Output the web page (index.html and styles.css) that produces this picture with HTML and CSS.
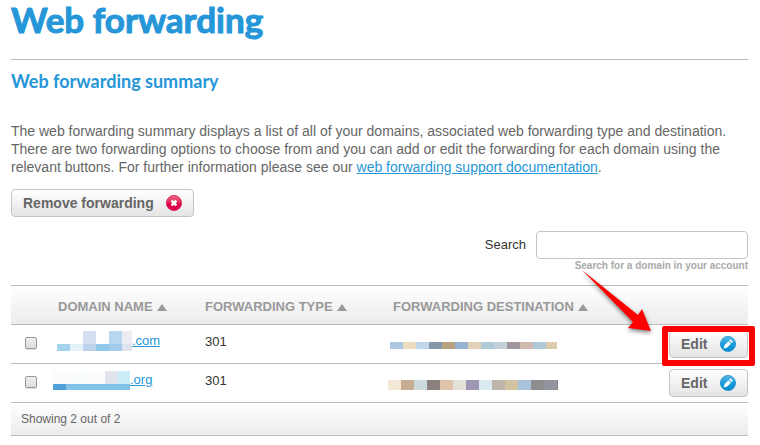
FILE: index.html
```html
<!DOCTYPE html>
<html lang="en">
<head>
<meta charset="UTF-8" />
<meta name="viewport" content="width=device-width, initial-scale=1" />
<title>Web forwarding</title>
<link rel="stylesheet" href="styles.css">
</head>
<body>
  <main class="page">
    <h1>Web forwarding</h1>
    <h2>Web forwarding summary</h2>

    <p class="intro">The web forwarding summary displays a list of all of your domains, associated web forwarding type and destination. There are two forwarding options to choose from and you can add or edit the forwarding for each domain using the relevant buttons. For further information please see our <a href="#">web forwarding support documentation</a>.</p>

    <button type="button" class="btn">
      Remove forwarding
      <svg class="btn-icon" viewBox="0 0 16 16" aria-hidden="true">
        <defs>
          <linearGradient id="red" x1="0" y1="0" x2="0" y2="1">
            <stop offset="0" stop-color="#ee6a86"/>
            <stop offset=".45" stop-color="#e32a5c"/>
            <stop offset=".55" stop-color="#d90049"/>
            <stop offset="1" stop-color="#e4004f"/>
          </linearGradient>
        </defs>
        <circle cx="8" cy="8" r="7.6" fill="url(#red)" stroke="#d3124d" stroke-width=".8"/>
        <path d="M5.6 5.6l4.8 4.8M10.4 5.6l-4.8 4.8" stroke="#fff" stroke-width="2.6"/>
      </svg>
    </button>

    <form class="search">
      <label for="search">Search</label>
      <input type="text" id="search" aria-describedby="search-hint">
      <small id="search-hint">Search for a domain in your account</small>
    </form>

    <table class="domains">
      <colgroup>
        <col class="col-check">
        <col class="col-name">
        <col class="col-type">
        <col>
        <col class="col-action">
      </colgroup>
      <thead>
        <tr>
          <th></th>
          <th>DOMAIN NAME <span class="sort"></span></th>
          <th>FORWARDING TYPE <span class="sort"></span></th>
          <th>FORWARDING DESTINATION <span class="sort"></span></th>
          <th></th>
        </tr>
      </thead>
      <tbody>
        <tr>
          <td class="check"><input type="checkbox" aria-label="Select .com domain"></td>
          <td>
            <div class="name">
              <svg width="79" height="20" viewBox="0 0 79 20" shape-rendering="crispEdges" aria-hidden="true">
                <path fill="#d3dff0" d="M30 0h13v13H30z"/>
                <path fill="#b8d7ee" d="M56 0h13v13H56z"/>
                <path fill="#eeebf2" d="M69 0h10v13H69z"/>
                <path fill="#a4d2ec" d="M4 13h13v7H4z"/>
                <path fill="#e4f1f6" d="M17 13h13v7H17z"/>
                <path fill="#bdd2ea" d="M30 13h13v7H30z"/>
                <path fill="#8fc8e9" d="M43 13h13v7H43z"/>
                <path fill="#a1cbe8" d="M56 13h13v7H56z"/>
                <path fill="#dfe1ed" d="M69 13h10v7H69z"/>
              </svg>
              <a href="#">.com</a>
            </div>
          </td>
          <td class="type">301</td>
          <td class="destination">
            <svg width="170" height="10" viewBox="0 0 170 10" shape-rendering="crispEdges" aria-hidden="true">
              <path fill="#adc7e2" d="M2 1h13v7H2z"/>
              <path fill="#ecddbe" d="M15 1h13v7H15z"/>
              <path fill="#bfd6eb" d="M28 1h13v7H28z"/>
              <path fill="#8797aa" d="M41 1h13v7H41z"/>
              <path fill="#b8a17e" d="M54 1h13v7H54z"/>
              <path fill="#95b3d1" d="M67 1h13v7H67z"/>
              <path fill="#e0d1b8" d="M80 1h13v7H80z"/>
              <path fill="#afcad7" d="M93 1h13v7H93z"/>
              <path fill="#c4d1d9" d="M106 1h13v7h-13z"/>
              <path fill="#a3979f" d="M119 1h13v7h-13z"/>
              <path fill="#d0bab0" d="M132 1h13v7h-13z"/>
              <path fill="#b0c9d8" d="M145 1h13v7h-13z"/>
              <path fill="#dccbac" d="M158 1h11v7h-11z"/>
            </svg>
          </td>
          <td>
            <div class="action">
              <button type="button" class="btn">
                Edit
                <svg class="btn-icon" viewBox="0 0 16 16" aria-hidden="true">
                  <defs>
                    <linearGradient id="blue" x1="0" y1="0" x2="0" y2="1">
                      <stop offset="0" stop-color="#58b8e6"/>
                      <stop offset=".5" stop-color="#1c9cdb"/>
                      <stop offset="1" stop-color="#0089d0"/>
                    </linearGradient>
                  </defs>
                  <circle cx="8" cy="8" r="7.6" fill="url(#blue)" stroke="#1b93d2" stroke-width=".8"/>
                  <path d="M10.4 3.2l2.6 2.6-1.3 1.3-2.6-2.6zM8.4 5.2L11 7.8l-3.8 3.8-3.6 1 1-3.6z" fill="#fff"/>
                </svg>
              </button>
              <span class="highlight"></span>
              <svg class="arrow" width="80" height="72" viewBox="0 0 80 72" aria-hidden="true">
                <path d="M4 4L60 49l4-6 9 22-23-3 5-6z" fill="#fe0000"/>
              </svg>
            </div>
          </td>
        </tr>
        <tr>
          <td class="check"><input type="checkbox" aria-label="Select .org domain"></td>
          <td>
            <div class="name">
              <svg width="77" height="20" viewBox="0 0 77 20" shape-rendering="crispEdges" aria-hidden="true">
                <path fill="#fbfcfe" d="M0 1h26v13H0z"/>
                <path fill="#f9fdfe" d="M26 1h13v13H26z"/>
                <path fill="#fdfcfd" d="M39 1h13v13H39z"/>
                <path fill="#e1e4ed" d="M52 1h13v13H52z"/>
                <path fill="#c8edf7" d="M65 1h12v13H65z"/>
                <path fill="#51a1d8" d="M0 14h13v6H0z"/>
                <path fill="#82c2e6" d="M13 14h64v6H13z"/>
              </svg>
              <a href="#">.org</a>
            </div>
          </td>
          <td class="type">301</td>
          <td class="destination">
            <svg width="170" height="10" viewBox="0 0 170 10" shape-rendering="crispEdges" aria-hidden="true">
              <path fill="#f3e7d5" d="M0 0h13v10H0z"/>
              <path fill="#c8ac91" d="M13 0h13v10H13z"/>
              <path fill="#cddadd" d="M26 0h13v10H26z"/>
              <path fill="#8b807d" d="M39 0h13v10H39z"/>
              <path fill="#dfc4ab" d="M52 0h13v10H52z"/>
              <path fill="#e4e2d8" d="M65 0h13v10H65z"/>
              <path fill="#a097b4" d="M78 0h13v10H78z"/>
              <path fill="#daebf2" d="M91 0h13v10H91z"/>
              <path fill="#bdb5aa" d="M104 0h13v10h-13z"/>
              <path fill="#d2c3a1" d="M117 0h13v10h-13z"/>
              <path fill="#a9c3dd" d="M130 0h13v10h-13z"/>
              <path fill="#8e8e91" d="M143 0h13v10h-13z"/>
              <path fill="#9295a0" d="M156 0h13v10h-13z"/>
              <path fill="#818186" d="M169 0h1v10h-1z"/>
            </svg>
          </td>
          <td>
            <div class="action">
              <button type="button" class="btn">
                Edit
                <svg class="btn-icon" viewBox="0 0 16 16" aria-hidden="true">
                  <circle cx="8" cy="8" r="7.6" fill="url(#blue)" stroke="#1b93d2" stroke-width=".8"/>
                  <path d="M10.4 3.2l2.6 2.6-1.3 1.3-2.6-2.6zM8.4 5.2L11 7.8l-3.8 3.8-3.6 1 1-3.6z" fill="#fff"/>
                </svg>
              </button>
            </div>
          </td>
        </tr>
      </tbody>
      <tfoot>
        <tr>
          <td colspan="5">Showing 2 out of 2</td>
        </tr>
      </tfoot>
    </table>
  </main>
</body>
</html>
```
FILE: styles.css
```css
* {
  box-sizing: border-box;
}
body {
  margin: 0;
  background: #fff;
  color: #666;
  font-family: "Liberation Sans", Arial, sans-serif;
  font-size: 14px;
  line-height: 18px;
}
.page {
  padding: 0 12px 0 11px;
}
a {
  color: #2596d8;
}
h1, h2 {
  margin: 0;
  color: #2596d8;
  font-family: Lato, "Liberation Sans", sans-serif;
  font-weight: bold;
}
h1 {
  height: 60px;
  border-bottom: 1px solid #bbb;
  font-size: 35px;
  line-height: 38px;
  -webkit-text-stroke: 1px #2596d8;
}
h2 {
  margin-bottom: 30px;
  padding-top: 10px;
  font-size: 18px;
  line-height: 22px;
}
.intro {
  margin: 0 0 13px;
}

/* Buttons */
.btn {
  display: flex;
  align-items: center;
  gap: 12px;
  height: 28px;
  padding: 0 11px;
  border: 1px solid #c4c4c4;
  border-radius: 4px;
  background: linear-gradient(#fff, #e4e4e4);
  color: #666;
  font: bold 14px "Liberation Sans", Arial, sans-serif;
  white-space: nowrap;
  cursor: pointer;
}
.btn-icon {
  width: 16px;
  height: 16px;
}

/* Search */
.search {
  display: grid;
  grid-template-columns: auto 212px;
  justify-content: end;
  align-items: center;
  column-gap: 10px;
  margin-top: 14px;
  color: #333;
  font-size: 13px;
}
.search input {
  width: 100%;
  height: 28px;
  padding: 0 6px;
  border: 1px solid #c4c4c4;
  border-radius: 4px;
}
.search small {
  grid-column: 2;
  color: #aaa;
  font-size: 10px;
  font-weight: bold;
  line-height: 13px;
  text-align: right;
  white-space: nowrap;
}

/* Domain table */
.domains {
  width: 100%;
  margin-top: 13px;
  border-collapse: separate;
  border-spacing: 0;
  border-top: 1px solid #bbb;
  table-layout: fixed;
  color: #333;
  font-size: 13px;
}
.col-check {
  width: 42px;
}
.col-name {
  width: 147px;
}
.col-type {
  width: 188px;
}
.col-action {
  width: 100px;
}
.domains th,
.domains td {
  height: 39px;
  padding: 0;
  border-bottom: 1px solid #bbb;
}
.domains thead,
.domains tfoot {
  background: linear-gradient(#fff, #ebebeb);
}
.domains th {
  padding: 4px 0 0 5px;
  color: #999;
  text-align: left;
  white-space: nowrap;
}
.sort {
  display: inline-block;
  margin-left: 1px;
  border: 5px solid transparent;
  border-top: 0;
  border-bottom: 7px solid #999;
}
.domains .check {
  padding: 0 0 2px 14px;
}
.check input {
  display: block;
  width: 12px;
  height: 12px;
  margin: 0;
  appearance: none;
  border: 1px solid #999;
  border-radius: 2px;
  background: linear-gradient(#eee, #ddd);
  box-shadow: 0 1px 1px #ddd;
}
.name {
  display: flex;
  align-items: center;
  padding-bottom: 6px;
}
.domains .type {
  padding: 0 0 4px 5px;
}
.domains .destination {
  padding-top: 4px;
}
.destination svg {
  display: block;
}
.action {
  position: relative;
  width: 79px;
  margin-left: auto;
}
.action .btn {
  width: 100%;
  justify-content: space-between;
}
.highlight {
  position: absolute;
  inset: -4px -7px -8px;
  border: 6px solid #fe0000;
  border-radius: 2px;
}
.arrow {
  position: absolute;
  top: -64px;
  right: 90px;
  filter: drop-shadow(0 2px 2px rgba(0, 0, 0, 0.5));
}
.domains tfoot td {
  height: 33px;
  padding-left: 10px;
  color: #666;
  font-size: 12px;
}
```
